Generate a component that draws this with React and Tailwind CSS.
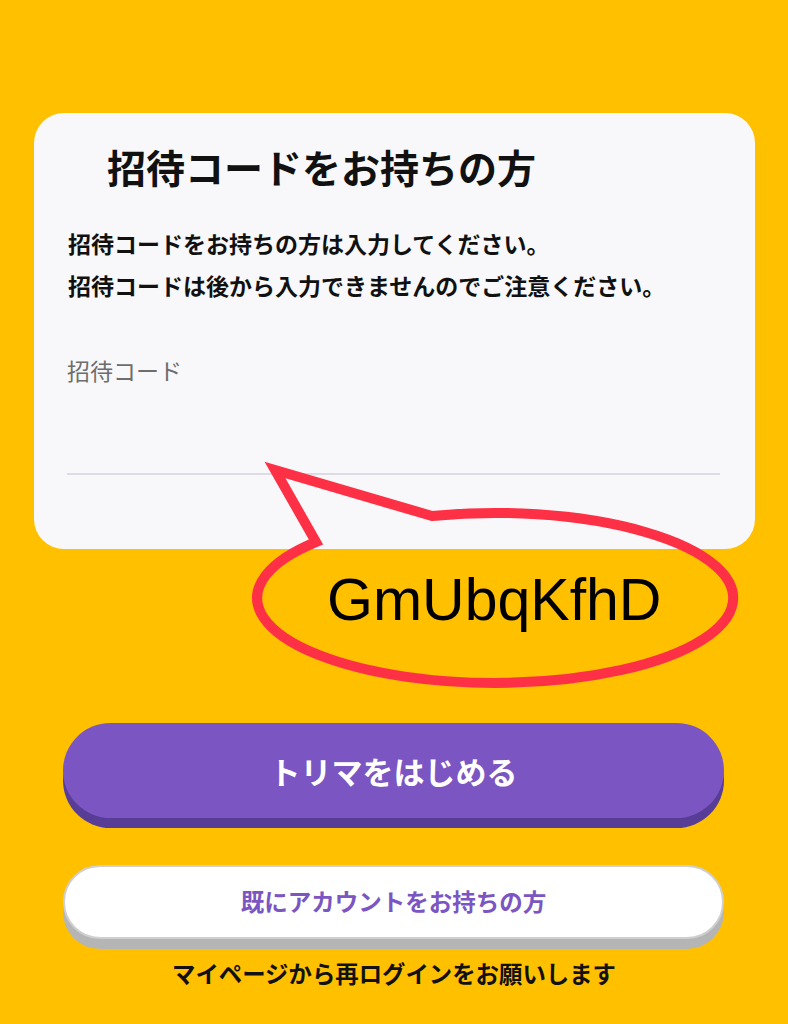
const JP = { fontFamily: '"Noto Sans CJK JP", "Noto Sans", sans-serif' }

function CodeCallout() {
  return (
    <div className="pointer-events-none absolute inset-0">
      <svg className="absolute left-0 top-0" width="788" height="1024" viewBox="0 0 788 1024">
        <path
          d="M 432 516 A 238 85 0 1 1 316 542 L 275 470 Z"
          fill="none"
          stroke="#fe3045"
          strokeWidth="10"
          strokeLinejoin="miter"
          strokeMiterlimit="10"
        />
      </svg>
      <span
        className="absolute left-[327px] top-[565px] text-[59px] leading-[70px] text-black"
        style={{ fontFamily: '"Liberation Sans", Arial, sans-serif' }}
      >
        GmUbqKfhD
      </span>
    </div>
  )
}

export default function App() {
  return (
    <div className="relative min-h-[1024px] w-[788px] overflow-hidden bg-[#ffc000]" style={JP}>
      <div className="flex flex-col pt-[113px]">
        <div className="ml-[34px] mr-[33px] h-[436px] rounded-[30px] bg-[#f8f8fa] pt-[30px]">
          <h1 className="pl-[73px] text-[39px] font-bold leading-[47px] text-[#111]">
            招待コードをお持ちの方
          </h1>
          <div className="mt-[32px] pl-[34px] text-[23px] font-bold leading-[42px] text-[#111]">
            <p>招待コードをお持ちの方は入力してください。</p>
            <p>招待コードは後から入力できませんのでご注意ください。</p>
          </div>
          <div className="ml-[33px] mr-[35px] mt-[43px]">
            <p className="text-[23px] leading-[42px] text-[#6d6d6d]">招待コード</p>
            <div className="h-[84px] border-b-2 border-[#dcdbe6]" />
          </div>
        </div>

        <button className="ml-[63px] mr-[64px] mt-[174px] h-[95px] rounded-full bg-[#7b55c1] text-[31px] font-bold leading-none text-white shadow-[0_10px_0_#573d95]">
          トリマをはじめる
        </button>

        <button className="ml-[63px] mr-[64px] mt-[47px] h-[74px] rounded-full border-2 border-[#cfcfcf] bg-white text-[23.5px] font-bold leading-none text-[#7b55c1] shadow-[0_10px_0_#b5b5b5]">
          既にアカウントをお持ちの方
        </button>

        <p className="mt-[19px] text-center text-[23.4px] font-bold leading-[30px] text-[#111]">
          マイページから再ログインをお願いします
        </p>
      </div>

      <CodeCallout />
    </div>
  )
}
